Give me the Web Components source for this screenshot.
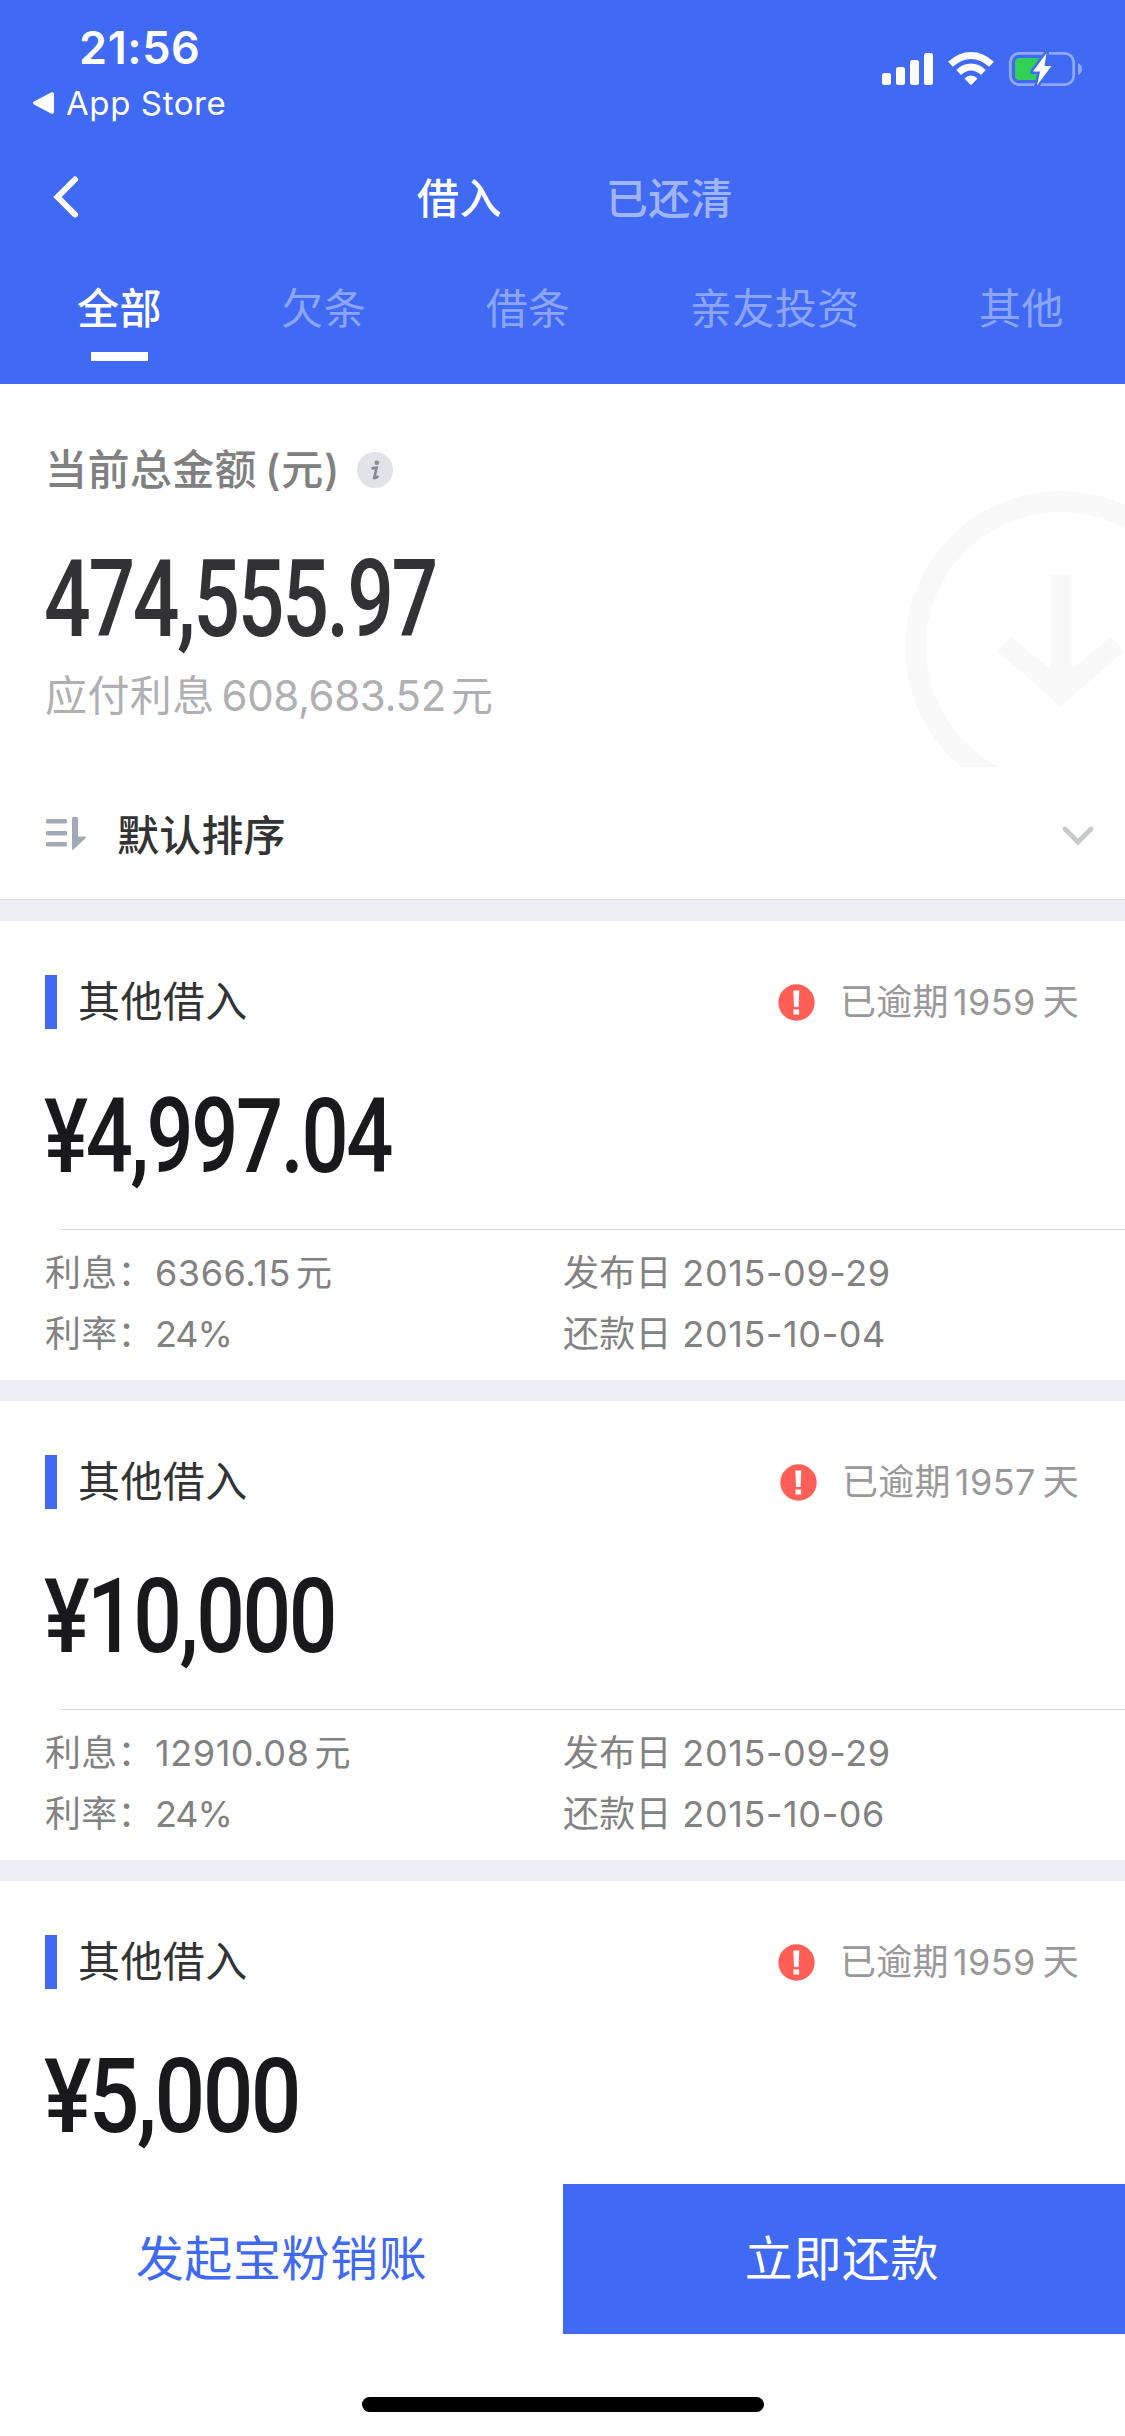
<!DOCTYPE html>
<html lang="zh-CN">
<head>
<meta charset="utf-8">
<title>借入</title>
<style>
:root {
  --brand: #4069f4;
  --gap-color: #eeeff4;
  --line: #dededf;
}
html, body { margin: 0; padding: 0; }
body {
  display: flex; flex-direction: column;
  width: 1125px; height: 2436px; overflow: hidden;
  background: #fff; color: #333;
  font-family: Inter, "Noto Sans CJK SC", sans-serif;
  font-size: 42px; letter-spacing: .4px;
}
main { flex: 1; min-height: 0; overflow: hidden; }
</style>
</head>
<body>
<status-bar time="21:56" back="App Store"></status-bar>
<nav-bar>
  <span slot="active">借入</span>
  <span slot="other">已还清</span>
</nav-bar>
<tab-strip>
  <tab-item active>全部</tab-item>
  <tab-item>欠条</tab-item>
  <tab-item>借条</tab-item>
  <tab-item>亲友投资</tab-item>
  <tab-item>其他</tab-item>
</tab-strip>
<main>
  <total-summary amount="474,555.97" amount-width="392" interest="608,683.52"></total-summary>
  <sort-row>默认排序</sort-row>
  <loan-card amount="¥4,997.04" amount-width="347" days="1959" interest="6366.15" rate="24%" issued="2015-09-29" due="2015-10-04">其他借入</loan-card>
  <loan-card amount="¥10,000" amount-width="291" days="1957" interest="12910.08" rate="24%" issued="2015-09-29" due="2015-10-06">其他借入</loan-card>
  <loan-card amount="¥5,000" amount-width="255" days="1959" interest="5000" rate="24%" issued="2015-09-29" due="2015-10-04" brief>其他借入</loan-card>
</main>
<action-bar>
  <span slot="secondary">发起宝粉销账</span>
  <span slot="primary">立即还款</span>
</action-bar>
<home-indicator></home-indicator>

<script>
/* Shared base: renders css() and html() into an open shadow root. */
class BaseElement extends HTMLElement {
  connectedCallback() {
    if (this.shadowRoot) return;
    this.attachShadow({ mode: "open" }).innerHTML = `<style>${this.css()}</style>${this.html()}`;
  }
  attr(name) { return this.getAttribute(name) || ""; }
}

class StatusBar extends BaseElement {
  css() {
    return `
:host { display: flex; justify-content: space-between; height: 132px; flex: none;
  background: var(--brand); color: #fff; }
.left { display: flex; flex-direction: column; padding: 20px 0 0 32px; }
.time { padding-left: 47px; font-size: 45px; font-weight: 600; line-height: 55px; letter-spacing: .6px; }
.back { display: flex; align-items: center; gap: 12px; font-size: 33px; line-height: 56px; letter-spacing: .6px; }
.icons { display: block; margin: 48px 40px 0 0; }`;
  }
  html() {
    return `
<div class="left">
  <span class="time">${this.attr("time")}</span>
  <span class="back">
    <svg width="22" height="24" viewBox="0 0 22 24"><path d="M2 10.600 19 1.600q3-1.200 3 1.600v17.600q0 2.800-3 1.600L2 13.400q-2-1.400 0-2.800z" fill="#fff"/></svg>
    <span>${this.attr("back")}</span>
  </span>
</div>
<svg class="icons" width="205" height="42" viewBox="880 48 205 42">
  <g fill="#fff">
    <rect x="882" y="73" width="9" height="12" rx="2.500"/>
    <rect x="896" y="67" width="9" height="18" rx="2.500"/>
    <rect x="910" y="60" width="9" height="25" rx="2.500"/>
    <rect x="924" y="53" width="9" height="32" rx="2.500"/>
    <path d="M971 85.300 964.400 78.500Q971 72.600 977.600 78.500z"/>
  </g>
  <g fill="none" stroke="#fff" stroke-width="7">
    <path d="M950.500 64.300Q960 55.500 971 55.500T991.500 64.300"/>
    <path d="M958.600 72.500Q964.500 67 971 67T983.400 72.500"/>
  </g>
  <rect x="1010.300" y="53.300" width="63.400" height="31.400" rx="9" fill="none" stroke="#fff" stroke-opacity=".42" stroke-width="2.800"/>
  <path d="M1078 63q4 2 4 6t-4 6z" fill="#fff" fill-opacity=".42"/>
  <path d="M1019.500 58H1040L1030 74H1037.500L1036 80H1019.500Q1015 80 1015 75.500V62.500Q1015 58 1019.500 58z" fill="#31d158"/>
  <path d="M1046.500 53 1033 71.500H1040L1037 85.500 1051.500 66H1044.500z" fill="#fff" stroke="var(--brand)" stroke-width="5" paint-order="stroke" stroke-linejoin="round"/>
</svg>`;
  }
}

class NavBar extends BaseElement {
  css() {
    return `
:host { display: grid; grid-template-columns: 417px auto 1fr; align-items: center;
  height: 134px; line-height: 60px; flex: none; background: var(--brand); color: #fff; font-weight: 500; }
svg { display: block; margin: 0 0 4px 52px; }
.other { padding-left: 104px; color: #a0b4fa; }`;
  }
  html() {
    return `
<svg width="28" height="46" viewBox="0 0 28 46"><path d="M23 5.500 5.500 23 23 40.500" fill="none" stroke="#fff" stroke-width="6" stroke-linecap="round"/></svg>
<slot name="active"></slot>
<div class="other"><slot name="other"></slot></div>`;
  }
}

class TabStrip extends BaseElement {
  css() {
    return `:host { display: flex; gap: 119.500px; height: 118px; flex: none; padding-left: 77px; background: var(--brand); }`;
  }
  html() { return `<slot></slot>`; }
}

class TabItem extends BaseElement {
  css() {
    return `
:host { display: flex; flex-direction: column; align-items: center; line-height: 85px; color: #8ca5f9; white-space: nowrap; }
:host([active]) { color: #fff; font-weight: 500; }
i { display: none; width: 57px; height: 9px; margin-top: 1px; background: #fff; }
:host([active]) i { display: block; }`;
  }
  html() { return `<slot></slot><i></i>`; }
}

/* Condensed figures: the text is fitted to the given width. */
class MoneyFigure extends BaseElement {
  css() {
    return `
:host { display: block; }
svg { display: block; overflow: visible; }
text { font-family: Roboto, sans-serif; font-weight: 550; letter-spacing: -3px; fill: currentColor; }`;
  }
  html() {
    const w = this.attr("width"), size = this.attr("size");
    return `<svg width="${w}" height="100"><text x="-1" y="80" font-size="${size}" textLength="${w}" lengthAdjust="spacingAndGlyphs">${this.attr("value")}</text></svg>`;
  }
}

class TotalSummary extends BaseElement {
  css() {
    return `
:host { display: grid; grid-template-columns: 1fr 225px; height: 410px; overflow: hidden; }
.text { padding: 56px 0 0 45px; }
.label { display: flex; align-items: center; line-height: 60px; height: 60px; color: #808080; font-weight: 500; }
.label .unit { margin-left: 8px; letter-spacing: .8px; }
.label svg { margin-left: 17px; }
money-figure { margin-top: 56px; color: #323234; }
.interest { margin-top: 8px; line-height: 63px; color: #b0b0b3; }
.interest span { margin: 0 5px 0 7px; letter-spacing: -.4px; }
.mark { height: 383px; display: block; }`;
  }
  html() {
    return `
<div class="text">
  <div class="label">当前总金额<span class="unit">(元)</span>
    <svg width="36" height="36" viewBox="0 0 36 36"><circle cx="18" cy="18" r="18" fill="#e1e3e8"/><circle cx="19.800" cy="10.800" r="2.300" fill="#8a8c91"/><path d="M14.500 16.500 19.500 15.700 17.300 26Q19 26.500 21.500 24" fill="none" stroke="#8a8c91" stroke-width="2.800"/></svg>
  </div>
  <money-figure value="${this.attr("amount")}" width="${this.attr("amount-width")}" size="107"></money-figure>
  <div class="interest">应付利息<span>${this.attr("interest")}</span>元</div>
</div>
<svg class="mark" width="225" height="383" viewBox="900 384 225 383">
  <circle cx="1061" cy="647" r="145.500" fill="none" stroke="#f9f9f9" stroke-width="21"/>
  <path d="M1050.500 575h21v94L1111 636.500l13 14.500-63 55.500L997 651l13.500-14.500 40 32.500z" fill="#f9f9f9"/>
</svg>`;
  }
}

class SortRow extends BaseElement {
  css() {
    return `
:host { display: flex; align-items: flex-start; height: 105px;
  border-bottom: 1px solid var(--line); padding: 0 31px 0 45px; font-weight: 500; }
.name { flex: 1; margin: 12px 0 0 31px; line-height: 60px; letter-spacing: .2px; }
.sort { margin-top: 22px; }
.arrow { margin-top: 31px; }`;
  }
  html() {
    return `
<svg class="sort" width="41" height="34" viewBox="0 0 41 34">
  <g fill="#a3a9b5"><rect x="1" y="3" width="21" height="4.500" rx="1.500"/><rect x="1" y="15" width="21" height="4.500" rx="1.500"/><rect x="1" y="26" width="21" height="4.500" rx="1.500"/>
  <path d="M27 2.500q0-1.500 1.500-1.500h3q1.500 0 1.500 1.500v18h7q1.500.5.5 1.700L28.500 33.500q-1.500.8-1.500-1z"/></g>
</svg>
<span class="name"><slot></slot></span>
<svg class="arrow" width="32" height="22" viewBox="0 0 32 22"><path d="M3 4 16 17 29 4" fill="none" stroke="#c8c9cc" stroke-width="4.800" stroke-linecap="round"/></svg>`;
  }
}

class LoanCard extends BaseElement {
  css() {
    return `
:host { display: block; height: 459px; border-top: 21px solid var(--gap-color); overflow: hidden; }
.head { display: flex; align-items: center; height: 54px; padding: 54px 46px 0 45px; }
.bar { width: 12px; height: 54px; background: var(--brand); }
.title { flex: 1; margin-left: 21px; line-height: 56px; }
.alert { margin-right: 25px; }
.overdue { font-size: 36px; line-height: 56px; letter-spacing: .3px; color: #999; }
.overdue span { margin: 0 7px 0 4px; letter-spacing: .4px; }
money-figure { margin: 63px 0 0 45px; color: #19191b; }
.meta { display: grid; grid-template-columns: 518px 1fr; row-gap: 7px; margin-left: 45px; padding-top: 16px;
  font-size: 36px; line-height: 54px; letter-spacing: .3px; color: #828282; }
.meta b { font-weight: 400; letter-spacing: .6px; }
.meta .rate { margin-left: 1px; letter-spacing: -1px; }
.meta .money { margin-left: 1px; }
.meta .yuan { margin-left: 5px; }
.rule { height: 1px; margin: 37px 0 0 60px; background: var(--line); }`;
  }
  html() {
    const meta = this.hasAttribute("brief") ? "" : `
<div class="rule"></div>
<div class="meta">
  <span>利息：<b class="money">${this.attr("interest")}</b><span class="yuan">元</span></span>
  <span>发布日 <b>${this.attr("issued")}</b></span>
  <span>利率：<b class="rate">${this.attr("rate")}</b></span>
  <span>还款日 <b>${this.attr("due")}</b></span>
</div>`;
    return `
<div class="head">
  <i class="bar"></i>
  <span class="title"><slot></slot></span>
  <svg class="alert" width="37" height="37" viewBox="0 0 37 37"><circle cx="18.500" cy="18.500" r="18.200" fill="#ff5f57"/><path d="M15.300 6.500h6l-.7 16.500h-4.600zM15.500 25.500h5.600v5h-5.600z" fill="#fff"/></svg>
  <span class="overdue">已逾期<span>${this.attr("days")}</span>天</span>
</div>
<money-figure value="${this.attr("amount")}" width="${this.attr("amount-width")}" size="104"></money-figure>
${meta}`;
  }
}

class ActionBar extends BaseElement {
  css() {
    return `
:host { display: grid; grid-template-columns: 563px 562px; grid-template-rows: 150px; height: 150px; flex: none;
  font-size: 48px; line-height: 150px; letter-spacing: .6px; text-align: center; background: #fff; }
.secondary { color: var(--brand); }
.primary { padding-right: 4px; background: var(--brand); color: #fff; }`;
  }
  html() {
    return `<div class="secondary"><slot name="secondary"></slot></div><div class="primary"><slot name="primary"></slot></div>`;
  }
}

class HomeIndicator extends BaseElement {
  css() {
    return `
:host { display: flex; justify-content: center; height: 102px; flex: none; }
i { width: 402px; height: 15px; margin-top: 63px; border-radius: 8px; background: #000; }`;
  }
  html() { return `<i></i>`; }
}

customElements.define("status-bar", StatusBar);
customElements.define("nav-bar", NavBar);
customElements.define("tab-strip", TabStrip);
customElements.define("tab-item", TabItem);
customElements.define("money-figure", MoneyFigure);
customElements.define("total-summary", TotalSummary);
customElements.define("sort-row", SortRow);
customElements.define("loan-card", LoanCard);
customElements.define("action-bar", ActionBar);
customElements.define("home-indicator", HomeIndicator);
</script>
</body>
</html>
